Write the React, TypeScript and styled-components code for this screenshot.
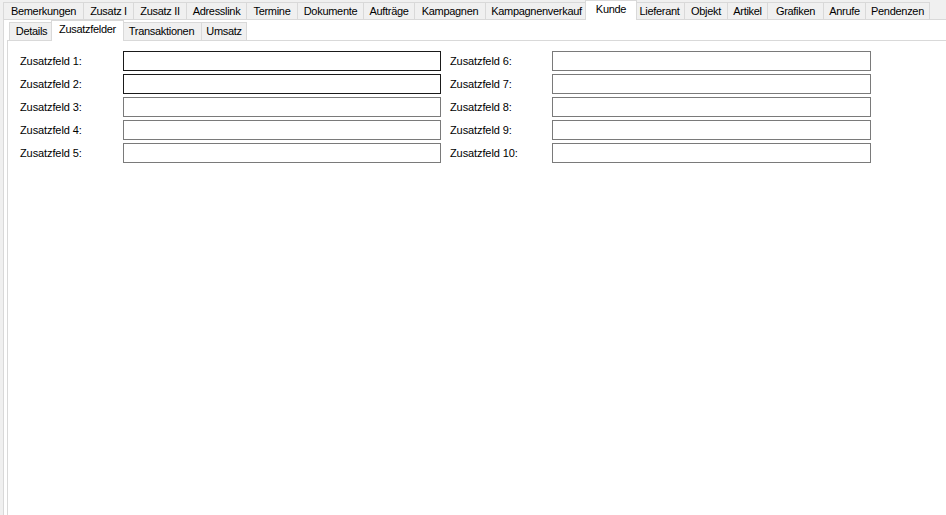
import styled, { createGlobalStyle } from 'styled-components'

const GlobalStyle = createGlobalStyle`
  html, body {
    margin: 0;
    padding: 0;
    background: #f0f0f0;
  }
  body {
    font-family: 'Liberation Sans', Arial, sans-serif;
    font-size: 11px;
    color: #000;
  }
`

const Window = styled.div`
  width: 946px;
  height: 515px;
  overflow: hidden;
  box-sizing: border-box;
  padding-left: 3px;
  background: #f0f0f0;
  display: flex;
  flex-direction: column;
`

const TabStrip = styled.div<{ $height: number; $inset: number }>`
  display: flex;
  align-items: flex-end;
  height: ${(p) => p.$height}px;
  padding-left: ${(p) => p.$inset}px;
  position: relative;
  z-index: 1;
  flex-shrink: 0;
`

const Tab = styled.div<{ $width: number; $selected?: boolean; $low: number; $high: number }>`
  box-sizing: border-box;
  width: ${(p) => (p.$selected ? p.$width + 4 : p.$width)}px;
  height: ${(p) => (p.$selected ? p.$high : p.$low)}px;
  margin: 0 ${(p) => (p.$selected ? -3 : -1)}px ${(p) => (p.$selected ? -1 : 0)}px
    ${(p) => (p.$selected ? -2 : 0)}px;
  border: 1px solid #d9d9d9;
  border-bottom: none;
  background: ${(p) => (p.$selected ? '#fff' : '#f0f0f0')};
  position: relative;
  z-index: ${(p) => (p.$selected ? 2 : 1)};
  display: flex;
  align-items: ${(p) => (p.$selected ? 'flex-start' : 'center')};
  justify-content: center;
  padding-top: ${(p) => (p.$selected ? 2 : 0)}px;
  white-space: nowrap;
  line-height: 13px;
  letter-spacing: -0.3px;
`

const Page = styled.div<{ $inset: number }>`
  flex: 1;
  display: flex;
  flex-direction: column;
  background: #fff;
  border-top: 1px solid #d9d9d9;
  border-left: 1px solid #d9d9d9;
  margin-right: -6px;
  margin-bottom: -6px;
  padding-left: ${(p) => p.$inset}px;
`

const FieldArea = styled.div`
  display: flex;
  gap: 9px;
  padding: 10px 0 0 12px;
`

const Column = styled.div`
  display: flex;
  flex-direction: column;
  gap: 3px;
`

const Row = styled.div`
  display: flex;
  align-items: center;
  height: 20px;
`

const Label = styled.span<{ $width: number }>`
  width: ${(p) => p.$width}px;
  white-space: nowrap;
  letter-spacing: -0.1px;
`

const Field = styled.input<{ $width: number; $focused?: boolean }>`
  box-sizing: border-box;
  width: ${(p) => p.$width}px;
  height: 20px;
  margin: 0;
  padding: 0 3px;
  border: 1px solid ${(p) => (p.$focused ? '#1a1a1a' : '#7a7a7a')};
  background: #fff;
  font: inherit;
  outline: none;
`

const outerTabs: [string, number][] = [
  ['Bemerkungen', 81],
  ['Zusatz I', 51],
  ['Zusatz II', 54],
  ['Adresslink', 61],
  ['Termine', 52],
  ['Dokumente', 67],
  ['Aufträge', 52],
  ['Kampagnen', 72],
  ['Kampagnenverkauf', 103],
  ['Kunde', 48],
  ['Lieferant', 51],
  ['Objekt', 44],
  ['Artikel', 41],
  ['Grafiken', 57],
  ['Anrufe', 43],
  ['Pendenzen', 65],
]

const innerTabs: [string, number][] = [
  ['Details', 45],
  ['Zusatzfelder', 69],
  ['Transaktionen', 81],
  ['Umsatz', 46],
]

const left = [1, 2, 3, 4, 5]
const right = [6, 7, 8, 9, 10]

export default function App() {
  return (
    <>
      <GlobalStyle />
      <Window>
        <TabStrip $height={19} $inset={0}>
          {outerTabs.map(([name, w]) => (
            <Tab key={name} $width={w} $low={17} $high={20} $selected={name === 'Kunde'}>
              {name}
            </Tab>
          ))}
        </TabStrip>
        <Page $inset={3}>
          <TabStrip $height={20} $inset={2}>
            {innerTabs.map(([name, w]) => (
              <Tab key={name} $width={w} $low={18} $high={21} $selected={name === 'Zusatzfelder'}>
                {name}
              </Tab>
            ))}
          </TabStrip>
          <Page $inset={0}>
            <FieldArea>
              <Column>
                {left.map((n) => (
                  <Row key={n}>
                    <Label $width={103}>Zusatzfeld {n}:</Label>
                    <Field $width={318} $focused={n <= 2} defaultValue="" />
                  </Row>
                ))}
              </Column>
              <Column>
                {right.map((n) => (
                  <Row key={n}>
                    <Label $width={102}>Zusatzfeld {n}:</Label>
                    <Field $width={319} defaultValue="" />
                  </Row>
                ))}
              </Column>
            </FieldArea>
          </Page>
        </Page>
      </Window>
    </>
  )
}
